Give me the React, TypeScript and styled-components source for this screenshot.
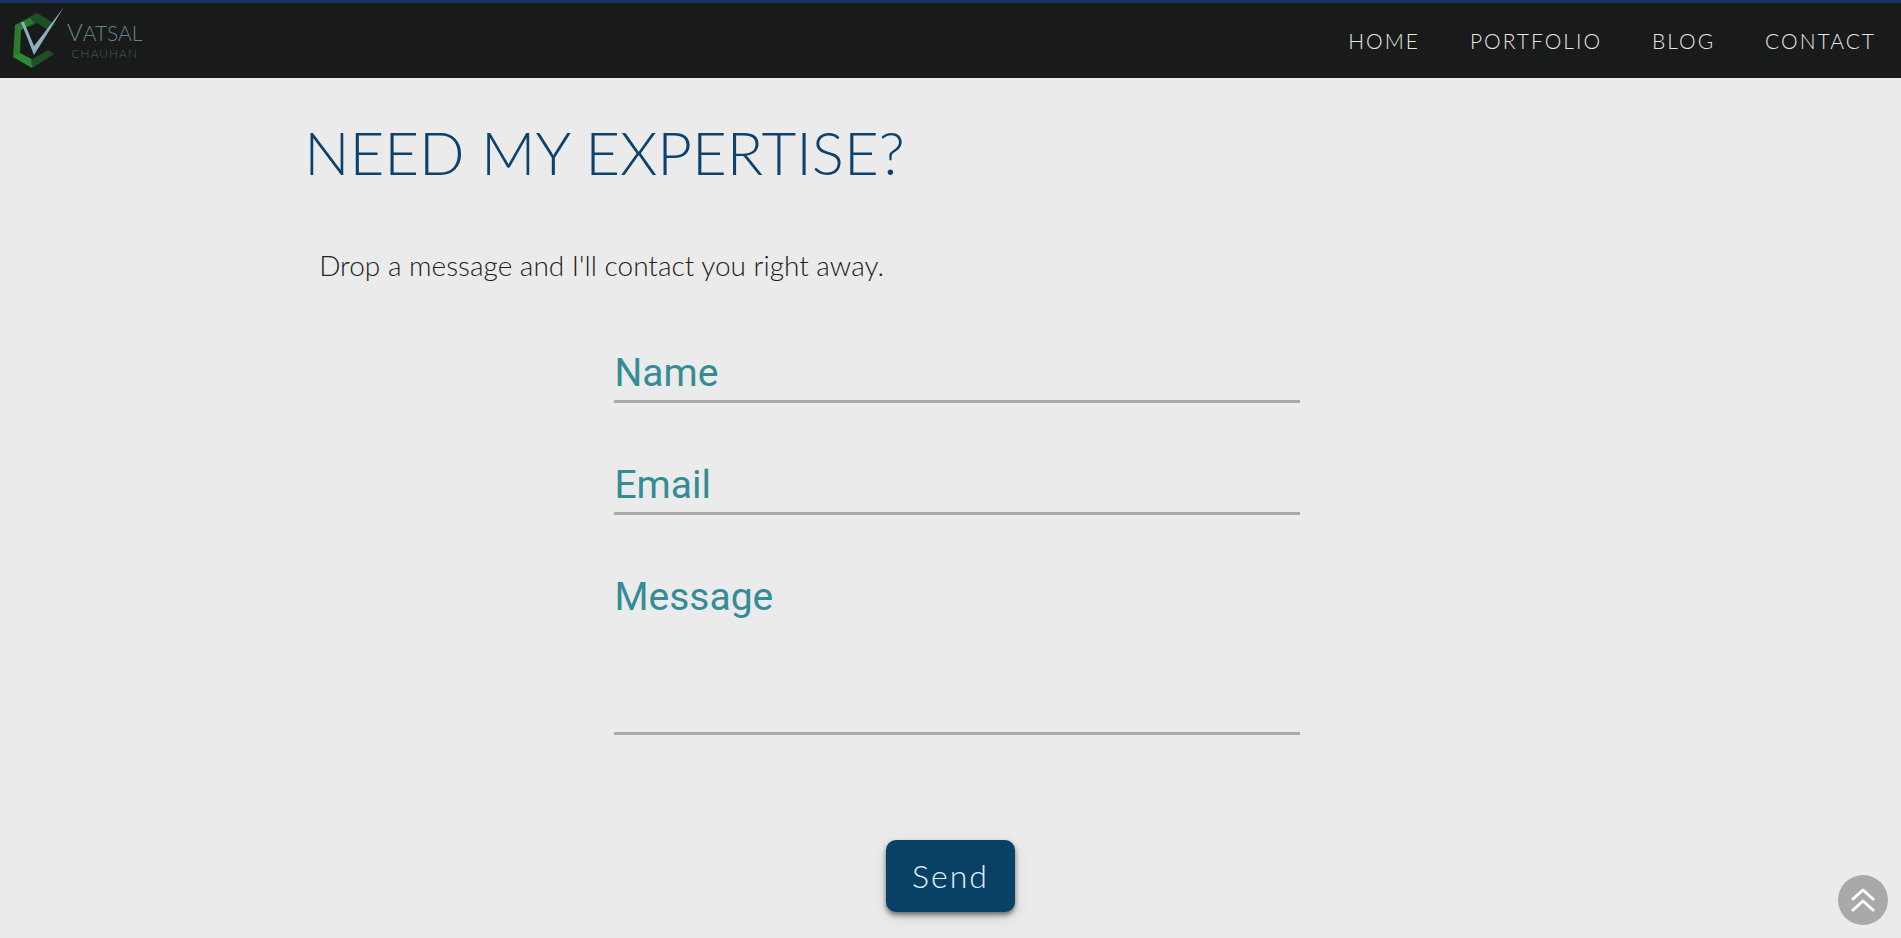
import React from 'react';
import styled, { createGlobalStyle } from 'styled-components';

const GlobalStyle = createGlobalStyle`
  *, *::before, *::after { box-sizing: border-box; }
  body {
    margin: 0;
    background: #ebebeb;
    font-family: Lato, "Open Sans", sans-serif;
  }
`;

const NavBar = styled.header`
  display: flex;
  align-items: center;
  justify-content: space-between;
  height: 78px;
  padding: 0 0 0 8px;
  background: #191a1a;
  border-top: 3px solid #1b3463;
`;

const LogoLink = styled.a`
  display: flex;
  align-items: center;
  gap: 3px;
  text-decoration: none;
`;

const LogoMark = styled.svg`
  width: 56px;
  height: 66px;
  overflow: visible;
`;

const LogoText = styled.span`
  display: flex;
  flex-direction: column;
  align-items: center;
  font-weight: 300;
  text-transform: uppercase;
`;

const LogoFirst = styled.span`
  font-size: 21px;
  line-height: 26px;
  color: #66848d;

  &::first-letter { font-size: 24px; }
`;

const LogoLast = styled.span`
  font-size: 12px;
  line-height: 16px;
  letter-spacing: 1px;
  color: #35664a;
`;

const NavList = styled.ul`
  display: flex;
  margin: 0;
  padding: 0;
  list-style: none;
`;

const NavLink = styled.a`
  display: block;
  padding: 0 25px;
  font-size: 21px;
  font-weight: 300;
  line-height: 28px;
  letter-spacing: 2px;
  color: #e6e6e6;
  text-decoration: none;
`;

const Main = styled.main`
  padding: 38px 16%;
`;

const Title = styled.h1`
  margin: 0;
  font-size: 60px;
  font-weight: 300;
  line-height: 72px;
  color: #0c426b;
`;

const Lead = styled.p`
  margin: 59px 0 0;
  padding-left: 15px;
  font-size: 28px;
  font-weight: 300;
  line-height: 36px;
  color: #222;
`;

const Form = styled.form`
  display: flex;
  flex-direction: column;
  align-items: center;
  margin-top: 65px;
`;

const Fields = styled.div`
  display: grid;
  gap: 57px;
  width: 53%;
  margin-left: 13px;
`;

const Field = styled.div`
  display: grid;

  & > * { grid-area: 1 / 1; }
`;

const FieldLabel = styled.label`
  align-self: start;
  justify-self: start;
  font-family: Roboto, sans-serif;
  font-size: 39px;
  font-weight: 400;
  line-height: 50px;
  color: #348c96;
  pointer-events: none;
`;

const Control = styled.input<{ $tall?: boolean }>`
  display: block;
  width: 100%;
  height: ${(p) => (p.$tall ? 163 : 55)}px;
  padding: 0;
  border: 0;
  border-bottom: 3px solid #a9a9a9;
  border-radius: 0;
  outline: 0;
  background: transparent;
  font: 300 32px/48px Roboto, sans-serif;
  color: #222;
  resize: none;

  &:focus { border-color: #2f8993; }
  &:focus + ${FieldLabel}, &:not(:placeholder-shown) + ${FieldLabel} {
    font-size: 20px;
    line-height: 24px;
    margin-top: -24px;
  }
`;

const SendButton = styled.button`
  margin-top: 105px;
  padding: 12px 26px;
  border: 0;
  border-radius: 10px;
  background: #084066;
  box-shadow: 0 3px 5px rgba(0, 0, 0, 0.5), 0 6px 16px rgba(0, 0, 0, 0.1);
  font: 300 32px/48px Lato, sans-serif;
  letter-spacing: 2px;
  color: #e4f2fa;
  cursor: pointer;
`;

const TopButton = styled.button`
  position: fixed;
  right: 13px;
  bottom: 13px;
  display: grid;
  place-items: center;
  width: 50px;
  height: 50px;
  padding: 0;
  border: 0;
  border-radius: 50%;
  background: #a9a9a9;
  cursor: pointer;
`;

const links = ['HOME', 'PORTFOLIO', 'BLOG', 'CONTACT'];

const fields = [
  { id: 'name', label: 'Name', type: 'text' },
  { id: 'email', label: 'Email', type: 'email' },
  { id: 'message', label: 'Message', tall: true },
];

export default function App() {
  return (
    <>
      <GlobalStyle />
      <NavBar>
        <LogoLink href="#home">
          <LogoMark viewBox="8 8 56 66" aria-hidden="true">
            <path d="M37 13 55 24 48 30 37 23 29 27 15 25Z" fill="#1f4f26" />
            <path d="M15 25 30 18 34 23 21 30 20 55 13 57Z" fill="#2b7a30" />
            <path d="M13 57 20 53 39 63 32 68Z" fill="#2f8a32" />
            <path d="M32 68 54 54 48 50 31 60Z" fill="#1f5026" />
            <path d="M20 16 31 49 33 55Z" fill="#5f8fa0" />
            <path d="M21 22 24 22 34 46 64 7 34 55Z" fill="#8cb0c2" />
          </LogoMark>
          <LogoText>
            <LogoFirst>Vatsal</LogoFirst>
            <LogoLast>Chauhan</LogoLast>
          </LogoText>
        </LogoLink>
        <nav>
          <NavList>
            {links.map((name) => (
              <li key={name}>
                <NavLink href={`#${name.toLowerCase()}`}>{name}</NavLink>
              </li>
            ))}
          </NavList>
        </nav>
      </NavBar>
      <Main>
        <Title>NEED MY EXPERTISE?</Title>
        <Lead>Drop a message and I'll contact you right away.</Lead>
        <Form onSubmit={(e) => e.preventDefault()}>
          <Fields>
            {fields.map(({ id, label, type, tall }) => (
              <Field key={id}>
                <Control
                  as={tall ? 'textarea' : 'input'}
                  id={id}
                  type={type}
                  placeholder=" "
                  $tall={tall}
                />
                <FieldLabel htmlFor={id}>{label}</FieldLabel>
              </Field>
            ))}
          </Fields>
          <SendButton type="submit">Send</SendButton>
        </Form>
      </Main>
      <TopButton type="button" aria-label="Back to top" onClick={() => window.scrollTo(0, 0)}>
        <svg width="24" height="26" viewBox="0 0 24 26" fill="none" stroke="#fff" strokeWidth="3" strokeLinecap="round" strokeLinejoin="round" aria-hidden="true">
          <path d="M2 12 12 3 22 12M2 23 12 14 22 23" />
        </svg>
      </TopButton>
    </>
  );
}
